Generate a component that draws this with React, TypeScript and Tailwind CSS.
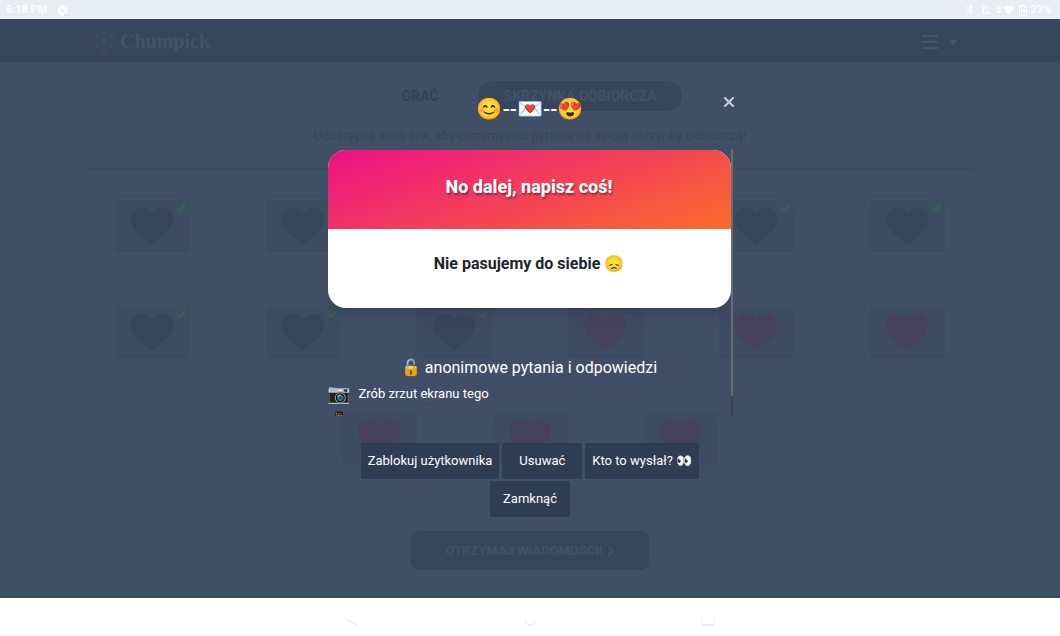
import React from 'react';
import { FaCaretDown } from 'react-icons/fa';
import { MdSettings, MdBluetooth, MdOutlineNotificationsOff } from 'react-icons/md';
import { X, ChevronRight } from 'lucide-react';

type Status = 'read' | 'new';

const messages: Status[] = [
  'read', 'read', 'read', 'read', 'read', 'read',
  'read', 'read', 'read', 'new', 'new', 'new',
  'new', 'new', 'new',
];

const WifiIcon = () => (
  <svg width="12" height="10" viewBox="0 0 12 10" fill="currentColor" className="ml-[2px]">
    <path d="M0 2.500Q6-1.500 12 2.500L6 10z" />
  </svg>
);

const BatteryIcon = () => (
  <svg width="8" height="11" viewBox="0 0 8 11" fill="none" stroke="currentColor" className="mr-[3px] ml-[4px]">
    <path d="M.5 1.500h2V.5h3v1h2v9h-7z" />
    <path d="M2.500 8V4l3 4V4" />
  </svg>
);

const StatusBar = () => (
  <div className="flex h-[19px] items-center justify-between bg-[#e8ecf5] pl-[6px] pr-[9px] pt-px text-[11px] font-medium text-white">
    <div className="flex items-center gap-[9px]">
      <span>6:18 PM</span>
      <MdSettings size={13} />
    </div>
    <div className="flex items-center">
      <MdBluetooth size={12} />
      <MdOutlineNotificationsOff size={12} className="ml-[4px]" />
      <span className="ml-[6px] flex flex-col gap-[2px]">
        <i className="h-[2px] w-[3px] bg-white" />
        <i className="h-[2px] w-[3px] bg-white" />
      </span>
      <WifiIcon />
      <BatteryIcon />
      <span>23%</span>
    </div>
  </div>
);

const LogoMark = () => (
  <svg width="26" height="26" viewBox="0 0 26 26" fill="none" stroke="#374f65">
    {[0, 60, 120, 180, 240, 300].map((a) => (
      <g key={a} transform={`rotate(${a} 13 13)`}>
        <path d="M13 13V7M13 7l-3-3M13 7l3-3" strokeWidth="1.5" />
        <circle cx="13" cy="3" r="1.5" />
      </g>
    ))}
  </svg>
);

const NavBar = () => (
  <nav className="flex h-[43px] items-center justify-between bg-[#37465c] px-[91px]">
    <a href="#home" className="flex items-center gap-[3px]">
      <LogoMark />
      <span className="font-['Liberation_Serif',serif] text-[20px] leading-6 font-bold text-[#42526a]">Chumpick</span>
    </a>
    <button aria-label="Menu" className="flex items-center gap-[8px] pt-[2px] pr-[9px] text-[#46556c]">
      <span className="flex w-4 flex-col gap-[4px]">
        <i className="h-[2px] bg-[#46556c]" />
        <i className="h-[2px] bg-[#46556c]" />
        <i className="h-[2px] bg-[#46556c]" />
      </span>
      <FaCaretDown size={14} />
    </button>
  </nav>
);

const Envelope = ({ status, arc }: { status: Status; arc: boolean }) => (
  <svg viewBox="0 0 151 106" className="block h-[106px] w-full overflow-visible" fill="none">
    <rect x="32" y="14" width="87" height="64" rx="8" stroke="#404e65" />
    <rect x="38" y="18" width="75" height="52" rx="4" fill="#3e4c63" />
    <path d="M40 69h71M40 24l34 27 36-27" stroke="#3b4960" />
    <path
      d="M75 63C68 56 54 49 54 37c0-6 5-11 11-11 4 0 8 2 10 6 2-4 6-6 10-6 6 0 11 5 11 11 0 12-14 19-21 26z"
      fill={status === 'read' ? '#38465d' : '#46425c'}
    />
    {status === 'read' && (
      <g>
        <circle cx="104" cy="26" r="10" fill="#3b505d" />
        <path d="M100 26l3 3 5-6" stroke="#405b65" strokeWidth="2" />
      </g>
    )}
    {arc && <path d="M107 15Q146 0 185 15" stroke="#3c4a60" strokeDasharray="4 3" />}
  </svg>
);

const Inbox = () => (
  <main className="flex flex-1 flex-col items-center border-b-2 border-[#3c465f] bg-[#414f66] px-[77px] pt-[19px] text-[#354359]">
    <div className="flex gap-4 text-[14px] font-bold">
      <button className="h-[30px] w-[84px] rounded-full">GRAĆ</button>
      <button className="h-[30px] w-[204px] rounded-full bg-[#37465c] text-[#435168]">SKRZYNKA ODBIORCZA</button>
    </div>
    <p className="mt-[15px] text-[13px] leading-5 text-[#37455b]">
      Udostępnij swój link, aby otrzymywać pytania na swoją skrzynkę odbiorczą!
    </p>
    <hr className="mt-[22px] w-full max-w-[888px] border-[#3b495f]" />
    <div className="mt-[13px] flex w-full max-w-[906px] flex-wrap justify-center">
      {messages.map((m, i) => (
        <button key={i} aria-label={`Wiadomość ${i + 1}`} className="w-1/6">
          <Envelope status={m} arc={i % 6 !== 5 && i !== 14} />
        </button>
      ))}
    </div>
    <button className="mt-[31px] flex h-[39px] w-[238px] items-center justify-center rounded-lg bg-[#37465c] text-[13px] font-bold text-[#435168]">
      OTRZYMAJ WIADOMOŚCI!
      <ChevronRight size={16} strokeWidth={3} className="-mr-1" />
    </button>
  </main>
);

const SystemNav = () => (
  <div className="flex h-[38px] items-center justify-center gap-[164px] bg-white pt-[4px] text-[#e6e6e6]">
    <svg width="14" height="14" fill="none" stroke="currentColor"><path d="M1 7l11 6" /></svg>
    <svg width="14" height="14" fill="none" stroke="currentColor"><path d="M2 8a5 5 0 0 0 10 0" /></svg>
    <svg width="14" height="14" fill="none" stroke="currentColor"><path d="M1 3v10h12V3" stroke="#f4f4f4" /><path d="M1 13h12" /></svg>
  </div>
);

const ActionButton = ({ children }: { children: React.ReactNode }) => (
  <button className="h-[36px] min-w-[80px] rounded-[2px] bg-[#2f3d52] px-[7px] text-[13px] text-white">{children}</button>
);

const MessageDialog = () => (
  <div role="dialog" aria-label="Wiadomość" className="absolute inset-x-0 top-[90px] mx-auto w-[405px] text-white">
    <div className="relative h-[59px] text-center text-[21px] leading-[38px] font-medium">
      😊--💌--😍
      <button aria-label="Zamknij okno" className="absolute top-[4px] -right-[4px] text-[#c9ced6]">
        <X size={16} strokeWidth={3} />
      </button>
    </div>

    <div className="flex h-[267px]">
      <div className="flex-1 overflow-hidden">
        <div className="mt-px overflow-hidden rounded-[18px] bg-white text-center shadow-lg">
          <h2 className="bg-linear-[160deg] from-[#ec1187] to-[#fb6c2c] pt-[25px] pb-[30px] text-[18px] leading-6 font-extrabold [text-shadow:1px_2px_2px_rgba(0,0,0,0.4)]">
            No dalej, napisz coś!
          </h2>
          <p className="pt-[23px] pb-[32px] text-[16px] leading-6 font-bold text-[#212529]">Nie pasujemy do siebie 😞</p>
        </div>
        <p className="mt-[48px] text-center text-[16px] leading-6">🔓 anonimowe pytania i odpowiedzi</p>
        <div className="mt-[2px] flex items-center gap-2 text-[13px] leading-6">
          <span className="w-[23px] text-[19px]">📷</span>
          Zrób zrzut ekranu tego
        </div>
        <div className="pt-[4px] pl-[2px] text-[16px] leading-5">📱</div>
      </div>
      <div className="w-[2px] bg-[#37455b]">
        <div className="h-[247px] bg-[#6c6c6c]" />
      </div>
    </div>

    <div className="mt-[27px] flex flex-wrap justify-center gap-x-[3px] gap-y-[2px]">
      <ActionButton>Zablokuj użytkownika</ActionButton>
      <ActionButton>Usuwać</ActionButton>
      <ActionButton>Kto to wysłał? 👀</ActionButton>
      <ActionButton>Zamknąć</ActionButton>
    </div>
  </div>
);

export default function App() {
  return (
    <div className="relative flex min-h-screen flex-col overflow-hidden font-[Roboto,'Noto_Color_Emoji',sans-serif]">
      <StatusBar />
      <NavBar />
      <Inbox />
      <SystemNav />
      <MessageDialog />
    </div>
  );
}
